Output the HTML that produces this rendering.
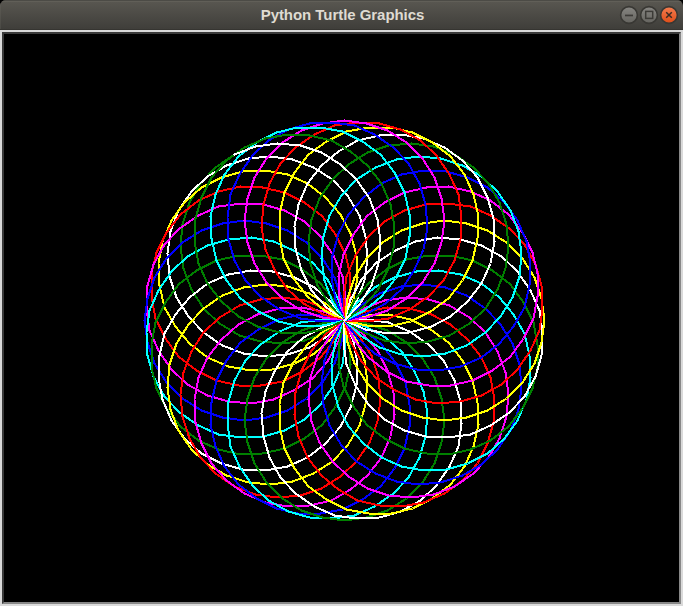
<!DOCTYPE html>
<html><head><meta charset="utf-8"><style>
html,body{margin:0;padding:0;width:683px;height:606px;overflow:hidden;background:#000}
#win{position:absolute;left:0;top:0;width:683px;height:606px;background:#000}
#fr{position:absolute;left:0;top:30px;width:683px;height:576px;background:#dadada}
#title{position:absolute;left:0;top:0;width:683px;height:30px;border-radius:6px 6px 0 0;overflow:hidden;
background:linear-gradient(#5a5852 0px,#57554f 3px,#3f3e3a 29px)}
#hl{position:absolute;left:0;top:0;width:683px;height:1px;background:#4c4b46}
#hl2{position:absolute;left:0;top:1px;width:683px;height:1px;background:#615f58}
#ll{position:absolute;left:0;top:0;width:1px;height:30px;background:linear-gradient(#5f5d56,#4a4944)}
#bl{position:absolute;left:0;top:29px;width:683px;height:1px;background:#363531}
#ttxt{position:absolute;left:1px;top:6px;width:683px;text-align:center;font:bold 15px "Liberation Sans",sans-serif;color:#dfdbd2;letter-spacing:-0.05px}
#cv{position:absolute;left:2px;top:32px;width:679px;height:572px;box-sizing:border-box;border-style:solid;border-width:2px;border-color:#3a3a3a #888 #888 #3a3a3a;background:#000}
</style></head><body><div id="win">
<div id="title"><div id="hl"></div><div id="hl2"></div><div id="ll"></div><div id="bl"></div><div id="ttxt">Python Turtle Graphics</div>
<svg width="683" height="30" style="position:absolute;left:0;top:0">
<defs>
<linearGradient id="gg" x1="0" y1="0" x2="0" y2="1"><stop offset="0" stop-color="#878682"/><stop offset="1" stop-color="#65645f"/></linearGradient>
<linearGradient id="og" x1="0" y1="0" x2="0" y2="1"><stop offset="0" stop-color="#f47d50"/><stop offset="1" stop-color="#de4c17"/></linearGradient>
</defs>
<circle cx="629" cy="15" r="8.4" fill="url(#gg)" stroke="#393834" stroke-width="1.6"/>
<rect x="625" y="14.6" width="8" height="1.7" fill="#3c3b37"/>
<circle cx="649" cy="15" r="8.4" fill="url(#gg)" stroke="#393834" stroke-width="1.6"/>
<rect x="645.7" y="11.4" width="7" height="7" fill="none" stroke="#3c3b37" stroke-width="1.5"/>
<circle cx="669" cy="15" r="8.4" fill="url(#og)" stroke="#393834" stroke-width="1.6"/>
<path d="M666.2 12.2L671.8 17.8M671.8 12.2L666.2 17.8" stroke="#3a2a22" stroke-width="1.5"/>
</svg>
</div>
<div id="fr"></div><div id="cv"></div>
<svg width="683" height="606" viewBox="0 0 683 606" style="position:absolute;left:0;top:0" shape-rendering="crispEdges" fill="none" stroke-linecap="round" stroke-linejoin="round">
<clipPath id="c"><rect x="4" y="34" width="675" height="568"/></clipPath>
<g clip-path="url(#c)">
<polyline points="344.5,320.5 366.5,317.5 387.5,310.5 406.5,298.5 422.5,282.5 434.5,263.5 441.5,242.5 444.5,220.5 441.5,198.5 434.5,177.5 422.5,158.5 406.5,142.5 387.5,130.5 366.5,123.5 344.5,120.5 322.5,123.5 301.5,130.5 282.5,142.5 266.5,158.5 254.5,177.5 247.5,198.5 244.5,220.5 247.5,242.5 254.5,263.5 266.5,282.5 282.5,298.5 301.5,310.5 322.5,317.5 344.5,320.5" stroke="#ff0000" stroke-width="2"/>
<polyline points="344.5,320.5 365.5,314.5 385.5,303.5 402.5,288.5 414.5,269.5 423.5,249.5 427.5,227.5 425.5,204.5 419.5,183.5 408.5,163.5 393.5,147.5 374.5,134.5 354.5,125.5 332.5,122.5 309.5,123.5 288.5,129.5 268.5,140.5 252.5,155.5 239.5,174.5 230.5,194.5 227.5,217.5 228.5,239.5 234.5,260.5 245.5,280.5 260.5,296.5 279.5,309.5 300.5,318.5 322.5,321.5 344.5,320.5" stroke="#ff00ff" stroke-width="2"/>
<polyline points="344.5,320.5 364.5,310.5 381.5,296.5 395.5,278.5 405.5,258.5 409.5,236.5 409.5,214.5 404.5,192.5 394.5,172.5 380.5,154.5 362.5,141.5 342.5,131.5 320.5,127.5 297.5,127.5 276.5,132.5 256.5,142.5 238.5,156.5 224.5,174.5 215.5,194.5 210.5,216.5 211.5,238.5 216.5,260.5 226.5,280.5 240.5,298.5 258.5,311.5 278.5,321.5 300.5,326.5 322.5,325.5 344.5,320.5" stroke="#0000ff" stroke-width="2"/>
<polyline points="344.5,320.5 362.5,307.5 377.5,290.5 387.5,270.5 393.5,248.5 394.5,226.5 390.5,204.5 381.5,183.5 367.5,165.5 350.5,151.5 331.5,140.5 309.5,135.5 287.5,134.5 265.5,138.5 244.5,147.5 226.5,160.5 211.5,177.5 201.5,197.5 195.5,218.5 194.5,241.5 198.5,263.5 207.5,283.5 221.5,301.5 238.5,316.5 257.5,326.5 279.5,332.5 301.5,333.5 323.5,329.5 344.5,320.5" stroke="#00ffff" stroke-width="2"/>
<polyline points="344.5,320.5 359.5,304.5 371.5,285.5 378.5,263.5 380.5,241.5 377.5,219.5 369.5,198.5 356.5,179.5 340.5,164.5 321.5,152.5 300.5,145.5 277.5,143.5 255.5,146.5 234.5,154.5 215.5,167.5 200.5,183.5 189.5,202.5 182.5,224.5 180.5,246.5 183.5,268.5 191.5,289.5 203.5,308.5 219.5,323.5 239.5,335.5 260.5,341.5 282.5,343.5 304.5,340.5 325.5,332.5 344.5,320.5" stroke="#008000" stroke-width="2"/>
<polyline points="344.5,320.5 356.5,301.5 364.5,280.5 367.5,258.5 365.5,236.5 359.5,215.5 347.5,195.5 332.5,179.5 313.5,167.5 292.5,159.5 270.5,156.5 248.5,158.5 226.5,165.5 207.5,176.5 191.5,191.5 178.5,210.5 170.5,231.5 167.5,253.5 169.5,276.5 176.5,297.5 188.5,316.5 203.5,332.5 222.5,345.5 243.5,353.5 265.5,356.5 287.5,354.5 309.5,347.5 328.5,335.5 344.5,320.5" stroke="#ffffff" stroke-width="2"/>
<polyline points="344.5,320.5 353.5,299.5 357.5,277.5 356.5,255.5 350.5,233.5 340.5,214.5 325.5,197.5 307.5,183.5 287.5,174.5 265.5,170.5 242.5,171.5 221.5,177.5 201.5,187.5 184.5,202.5 171.5,220.5 162.5,241.5 158.5,263.5 159.5,285.5 164.5,307.5 175.5,326.5 189.5,343.5 207.5,357.5 228.5,366.5 250.5,370.5 272.5,369.5 294.5,363.5 314.5,353.5 331.5,338.5 344.5,320.5" stroke="#ffff00" stroke-width="2"/>
<polyline points="344.5,320.5 349.5,298.5 350.5,276.5 345.5,254.5 335.5,234.5 322.5,216.5 304.5,202.5 284.5,192.5 262.5,187.5 240.5,186.5 218.5,191.5 198.5,200.5 180.5,214.5 166.5,232.5 156.5,252.5 151.5,273.5 151.5,296.5 155.5,318.5 165.5,338.5 178.5,356.5 196.5,370.5 216.5,380.5 238.5,385.5 260.5,385.5 282.5,381.5 302.5,371.5 320.5,357.5 334.5,340.5 344.5,320.5" stroke="#ff0000" stroke-width="2"/>
<polyline points="344.5,320.5 345.5,298.5 342.5,276.5 333.5,255.5 320.5,236.5 304.5,221.5 284.5,210.5 263.5,204.5 241.5,203.5 218.5,206.5 198.5,215.5 179.5,228.5 164.5,244.5 153.5,264.5 147.5,285.5 146.5,308.5 149.5,330.5 158.5,350.5 171.5,369.5 187.5,384.5 207.5,395.5 228.5,401.5 251.5,403.5 273.5,399.5 293.5,390.5 312.5,378.5 327.5,361.5 338.5,341.5 344.5,320.5" stroke="#ff00ff" stroke-width="2"/>
<polyline points="344.5,320.5 341.5,298.5 334.5,277.5 322.5,258.5 306.5,242.5 287.5,230.5 266.5,223.5 244.5,220.5 222.5,223.5 201.5,230.5 182.5,242.5 166.5,258.5 154.5,277.5 147.5,298.5 144.5,320.5 147.5,342.5 154.5,363.5 166.5,382.5 182.5,398.5 201.5,410.5 222.5,417.5 244.5,420.5 266.5,417.5 287.5,410.5 306.5,398.5 322.5,382.5 334.5,363.5 341.5,342.5 344.5,320.5" stroke="#0000ff" stroke-width="2"/>
<polyline points="344.5,320.5 338.5,299.5 327.5,279.5 312.5,262.5 293.5,250.5 273.5,241.5 251.5,237.5 228.5,239.5 207.5,245.5 187.5,256.5 171.5,271.5 158.5,290.5 149.5,310.5 146.5,332.5 147.5,355.5 153.5,376.5 164.5,396.5 179.5,412.5 198.5,425.5 218.5,434.5 241.5,437.5 263.5,436.5 284.5,430.5 304.5,419.5 320.5,404.5 333.5,385.5 342.5,364.5 345.5,342.5 344.5,320.5" stroke="#00ffff" stroke-width="2"/>
<polyline points="344.5,320.5 334.5,300.5 320.5,283.5 302.5,269.5 282.5,259.5 260.5,255.5 238.5,255.5 216.5,260.5 196.5,270.5 178.5,284.5 165.5,302.5 155.5,322.5 151.5,344.5 151.5,367.5 156.5,388.5 166.5,408.5 180.5,426.5 198.5,440.5 218.5,449.5 240.5,454.5 262.5,453.5 284.5,448.5 304.5,438.5 322.5,424.5 335.5,406.5 345.5,386.5 350.5,364.5 349.5,342.5 344.5,320.5" stroke="#008000" stroke-width="2"/>
<polyline points="344.5,320.5 331.5,302.5 314.5,287.5 294.5,277.5 272.5,271.5 250.5,270.5 228.5,274.5 207.5,283.5 189.5,297.5 175.5,314.5 164.5,333.5 159.5,355.5 158.5,377.5 162.5,399.5 171.5,420.5 184.5,438.5 201.5,453.5 221.5,463.5 242.5,469.5 265.5,470.5 287.5,466.5 307.5,457.5 325.5,443.5 340.5,426.5 350.5,407.5 356.5,385.5 357.5,363.5 353.5,341.5 344.5,320.5" stroke="#ffffff" stroke-width="2"/>
<polyline points="344.5,320.5 328.5,305.5 309.5,293.5 287.5,286.5 265.5,284.5 243.5,287.5 222.5,295.5 203.5,308.5 188.5,324.5 176.5,343.5 169.5,364.5 167.5,387.5 170.5,409.5 178.5,430.5 191.5,449.5 207.5,464.5 226.5,475.5 248.5,482.5 270.5,484.5 292.5,481.5 313.5,473.5 332.5,461.5 347.5,445.5 359.5,425.5 365.5,404.5 367.5,382.5 364.5,360.5 356.5,339.5 344.5,320.5" stroke="#ffff00" stroke-width="2"/>
<polyline points="344.5,320.5 325.5,308.5 304.5,300.5 282.5,297.5 260.5,299.5 239.5,305.5 219.5,317.5 203.5,332.5 191.5,351.5 183.5,372.5 180.5,394.5 182.5,416.5 189.5,438.5 200.5,457.5 215.5,473.5 234.5,486.5 255.5,494.5 277.5,497.5 300.5,495.5 321.5,488.5 340.5,476.5 356.5,461.5 369.5,442.5 377.5,421.5 380.5,399.5 378.5,377.5 371.5,355.5 359.5,336.5 344.5,320.5" stroke="#ff0000" stroke-width="2"/>
<polyline points="344.5,320.5 323.5,311.5 301.5,307.5 279.5,308.5 257.5,314.5 238.5,324.5 221.5,339.5 207.5,357.5 198.5,377.5 194.5,399.5 195.5,422.5 201.5,443.5 211.5,463.5 226.5,480.5 244.5,493.5 265.5,502.5 287.5,506.5 309.5,505.5 331.5,500.5 350.5,489.5 367.5,475.5 381.5,457.5 390.5,436.5 394.5,414.5 393.5,392.5 387.5,370.5 377.5,350.5 362.5,333.5 344.5,320.5" stroke="#ff00ff" stroke-width="2"/>
<polyline points="344.5,320.5 322.5,315.5 300.5,314.5 278.5,319.5 258.5,329.5 240.5,342.5 226.5,360.5 216.5,380.5 211.5,402.5 210.5,424.5 215.5,446.5 224.5,466.5 238.5,484.5 256.5,498.5 276.5,508.5 297.5,513.5 320.5,513.5 342.5,509.5 362.5,499.5 380.5,486.5 394.5,468.5 404.5,448.5 409.5,426.5 409.5,404.5 405.5,382.5 395.5,362.5 381.5,344.5 364.5,330.5 344.5,320.5" stroke="#0000ff" stroke-width="2"/>
<polyline points="344.5,320.5 322.5,319.5 300.5,322.5 279.5,331.5 260.5,344.5 245.5,360.5 234.5,380.5 228.5,401.5 227.5,423.5 230.5,446.5 239.5,466.5 252.5,485.5 268.5,500.5 288.5,511.5 309.5,517.5 332.5,518.5 354.5,515.5 374.5,506.5 393.5,493.5 408.5,477.5 419.5,457.5 425.5,436.5 427.5,413.5 423.5,391.5 414.5,371.5 402.5,352.5 385.5,337.5 365.5,326.5 344.5,320.5" stroke="#00ffff" stroke-width="2"/>
<polyline points="344.5,320.5 322.5,323.5 301.5,330.5 282.5,342.5 266.5,358.5 254.5,377.5 247.5,398.5 244.5,420.5 247.5,442.5 254.5,463.5 266.5,482.5 282.5,498.5 301.5,510.5 322.5,517.5 344.5,520.5 366.5,517.5 387.5,510.5 406.5,498.5 422.5,482.5 434.5,463.5 441.5,442.5 444.5,420.5 441.5,398.5 434.5,377.5 422.5,358.5 406.5,342.5 387.5,330.5 366.5,323.5 344.5,320.5" stroke="#008000" stroke-width="2"/>
<polyline points="344.5,320.5 323.5,326.5 303.5,337.5 286.5,352.5 274.5,371.5 265.5,391.5 261.5,413.5 263.5,436.5 269.5,457.5 280.5,477.5 295.5,493.5 314.5,506.5 334.5,515.5 356.5,518.5 379.5,517.5 400.5,511.5 420.5,500.5 436.5,485.5 449.5,466.5 458.5,446.5 461.5,423.5 460.5,401.5 454.5,380.5 443.5,360.5 428.5,344.5 409.5,331.5 388.5,322.5 366.5,319.5 344.5,320.5" stroke="#ffffff" stroke-width="2"/>
<polyline points="344.5,320.5 324.5,330.5 307.5,344.5 293.5,362.5 283.5,382.5 279.5,404.5 279.5,426.5 284.5,448.5 294.5,468.5 308.5,486.5 326.5,499.5 346.5,509.5 368.5,513.5 391.5,513.5 412.5,508.5 432.5,498.5 450.5,484.5 464.5,466.5 473.5,446.5 478.5,424.5 477.5,402.5 472.5,380.5 462.5,360.5 448.5,342.5 430.5,329.5 410.5,319.5 388.5,314.5 366.5,315.5 344.5,320.5" stroke="#ffff00" stroke-width="2"/>
<polyline points="344.5,320.5 326.5,333.5 311.5,350.5 301.5,370.5 295.5,392.5 294.5,414.5 298.5,436.5 307.5,457.5 321.5,475.5 338.5,489.5 357.5,500.5 379.5,505.5 401.5,506.5 423.5,502.5 444.5,493.5 462.5,480.5 477.5,463.5 487.5,443.5 493.5,422.5 494.5,399.5 490.5,377.5 481.5,357.5 467.5,339.5 450.5,324.5 431.5,314.5 409.5,308.5 387.5,307.5 365.5,311.5 344.5,320.5" stroke="#ff0000" stroke-width="2"/>
<polyline points="344.5,320.5 329.5,336.5 317.5,355.5 310.5,377.5 308.5,399.5 311.5,421.5 319.5,442.5 332.5,461.5 348.5,476.5 367.5,488.5 388.5,495.5 411.5,497.5 433.5,494.5 454.5,486.5 473.5,473.5 488.5,457.5 499.5,438.5 506.5,416.5 508.5,394.5 505.5,372.5 497.5,351.5 485.5,332.5 469.5,317.5 449.5,305.5 428.5,299.5 406.5,297.5 384.5,300.5 363.5,308.5 344.5,320.5" stroke="#ff00ff" stroke-width="2"/>
<polyline points="344.5,320.5 332.5,339.5 324.5,360.5 321.5,382.5 323.5,404.5 329.5,425.5 341.5,445.5 356.5,461.5 375.5,473.5 396.5,481.5 418.5,484.5 440.5,482.5 462.5,475.5 481.5,464.5 497.5,449.5 510.5,430.5 518.5,409.5 521.5,387.5 519.5,364.5 512.5,343.5 500.5,324.5 485.5,308.5 466.5,295.5 445.5,287.5 423.5,284.5 401.5,286.5 379.5,293.5 360.5,305.5 344.5,320.5" stroke="#0000ff" stroke-width="2"/>
<polyline points="344.5,320.5 335.5,341.5 331.5,363.5 332.5,385.5 338.5,407.5 348.5,426.5 363.5,443.5 381.5,457.5 401.5,466.5 423.5,470.5 446.5,469.5 467.5,463.5 487.5,453.5 504.5,438.5 517.5,420.5 526.5,399.5 530.5,377.5 529.5,355.5 524.5,333.5 513.5,314.5 499.5,297.5 481.5,283.5 460.5,274.5 438.5,270.5 416.5,271.5 394.5,277.5 374.5,287.5 357.5,302.5 344.5,320.5" stroke="#00ffff" stroke-width="2"/>
<polyline points="344.5,320.5 339.5,342.5 338.5,364.5 343.5,386.5 353.5,406.5 366.5,424.5 384.5,438.5 404.5,448.5 426.5,453.5 448.5,454.5 470.5,449.5 490.5,440.5 508.5,426.5 522.5,408.5 532.5,388.5 537.5,367.5 537.5,344.5 533.5,322.5 523.5,302.5 510.5,284.5 492.5,270.5 472.5,260.5 450.5,255.5 428.5,255.5 406.5,259.5 386.5,269.5 368.5,283.5 354.5,300.5 344.5,320.5" stroke="#008000" stroke-width="2"/>
<polyline points="344.5,320.5 343.5,342.5 346.5,364.5 355.5,385.5 368.5,404.5 384.5,419.5 404.5,430.5 425.5,436.5 447.5,437.5 470.5,434.5 490.5,425.5 509.5,412.5 524.5,396.5 535.5,376.5 541.5,355.5 542.5,332.5 539.5,310.5 530.5,290.5 517.5,271.5 501.5,256.5 481.5,245.5 460.5,239.5 437.5,237.5 415.5,241.5 395.5,250.5 376.5,262.5 361.5,279.5 350.5,299.5 344.5,320.5" stroke="#ffffff" stroke-width="2"/>
<polyline points="344.5,320.5 347.5,342.5 354.5,363.5 366.5,382.5 382.5,398.5 401.5,410.5 422.5,417.5 444.5,420.5 466.5,417.5 487.5,410.5 506.5,398.5 522.5,382.5 534.5,363.5 541.5,342.5 544.5,320.5 541.5,298.5 534.5,277.5 522.5,258.5 506.5,242.5 487.5,230.5 466.5,223.5 444.5,220.5 422.5,223.5 401.5,230.5 382.5,242.5 366.5,258.5 354.5,277.5 347.5,298.5 344.5,320.5" stroke="#ffff00" stroke-width="2"/>
<polyline points="344.5,320.5 350.5,341.5 361.5,361.5 376.5,378.5 395.5,390.5 415.5,399.5 437.5,403.5 460.5,401.5 481.5,395.5 501.5,384.5 517.5,369.5 530.5,350.5 539.5,330.5 542.5,308.5 541.5,285.5 535.5,264.5 524.5,244.5 509.5,228.5 490.5,215.5 470.5,206.5 447.5,203.5 425.5,204.5 404.5,210.5 384.5,221.5 368.5,236.5 355.5,255.5 346.5,276.5 343.5,298.5 344.5,320.5" stroke="#ff0000" stroke-width="2"/>
<polyline points="344.5,320.5 354.5,340.5 368.5,357.5 386.5,371.5 406.5,381.5 428.5,385.5 450.5,385.5 472.5,380.5 492.5,370.5 510.5,356.5 523.5,338.5 533.5,318.5 537.5,296.5 537.5,273.5 532.5,252.5 522.5,232.5 508.5,214.5 490.5,200.5 470.5,191.5 448.5,186.5 426.5,187.5 404.5,192.5 384.5,202.5 366.5,216.5 353.5,234.5 343.5,254.5 338.5,276.5 339.5,298.5 344.5,320.5" stroke="#ff00ff" stroke-width="2"/>
<polyline points="344.5,320.5 357.5,338.5 374.5,353.5 394.5,363.5 416.5,369.5 438.5,370.5 460.5,366.5 481.5,357.5 499.5,343.5 513.5,326.5 524.5,307.5 529.5,285.5 530.5,263.5 526.5,241.5 517.5,220.5 504.5,202.5 487.5,187.5 467.5,177.5 446.5,171.5 423.5,170.5 401.5,174.5 381.5,183.5 363.5,197.5 348.5,214.5 338.5,233.5 332.5,255.5 331.5,277.5 335.5,299.5 344.5,320.5" stroke="#0000ff" stroke-width="2"/>
<polyline points="344.5,320.5 360.5,335.5 379.5,347.5 401.5,354.5 423.5,356.5 445.5,353.5 466.5,345.5 485.5,332.5 500.5,316.5 512.5,297.5 519.5,276.5 521.5,253.5 518.5,231.5 510.5,210.5 497.5,191.5 481.5,176.5 462.5,165.5 440.5,158.5 418.5,156.5 396.5,159.5 375.5,167.5 356.5,179.5 341.5,195.5 329.5,215.5 323.5,236.5 321.5,258.5 324.5,280.5 332.5,301.5 344.5,320.5" stroke="#00ffff" stroke-width="2"/>
<polyline points="344.5,320.5 363.5,332.5 384.5,340.5 406.5,343.5 428.5,341.5 449.5,335.5 469.5,323.5 485.5,308.5 497.5,289.5 505.5,268.5 508.5,246.5 506.5,224.5 499.5,202.5 488.5,183.5 473.5,167.5 454.5,154.5 433.5,146.5 411.5,143.5 388.5,145.5 367.5,152.5 348.5,164.5 332.5,179.5 319.5,198.5 311.5,219.5 308.5,241.5 310.5,263.5 317.5,285.5 329.5,304.5 344.5,320.5" stroke="#008000" stroke-width="2"/>
<polyline points="344.5,320.5 365.5,329.5 387.5,333.5 409.5,332.5 431.5,326.5 450.5,316.5 467.5,301.5 481.5,283.5 490.5,263.5 494.5,241.5 493.5,218.5 487.5,197.5 477.5,177.5 462.5,160.5 444.5,147.5 423.5,138.5 401.5,134.5 379.5,135.5 357.5,140.5 338.5,151.5 321.5,165.5 307.5,183.5 298.5,204.5 294.5,226.5 295.5,248.5 301.5,270.5 311.5,290.5 326.5,307.5 344.5,320.5" stroke="#ffffff" stroke-width="2"/>
<polyline points="344.5,320.5 366.5,325.5 388.5,326.5 410.5,321.5 430.5,311.5 448.5,298.5 462.5,280.5 472.5,260.5 477.5,238.5 478.5,216.5 473.5,194.5 464.5,174.5 450.5,156.5 432.5,142.5 412.5,132.5 391.5,127.5 368.5,127.5 346.5,131.5 326.5,141.5 308.5,154.5 294.5,172.5 284.5,192.5 279.5,214.5 279.5,236.5 283.5,258.5 293.5,278.5 307.5,296.5 324.5,310.5 344.5,320.5" stroke="#ffff00" stroke-width="2"/>
<polyline points="344.5,320.5 366.5,321.5 388.5,318.5 409.5,309.5 428.5,296.5 443.5,280.5 454.5,260.5 460.5,239.5 461.5,217.5 458.5,194.5 449.5,174.5 436.5,155.5 420.5,140.5 400.5,129.5 379.5,123.5 356.5,122.5 334.5,125.5 314.5,134.5 295.5,147.5 280.5,163.5 269.5,183.5 263.5,204.5 261.5,227.5 265.5,249.5 274.5,269.5 286.5,288.5 303.5,303.5 323.5,314.5 344.5,320.5" stroke="#ff0000" stroke-width="2"/>
<polyline points="344.5,320.5 366.5,317.5 387.5,310.5 406.5,298.5 422.5,282.5 434.5,263.5 441.5,242.5 444.5,220.5 441.5,198.5 434.5,177.5 422.5,158.5 406.5,142.5 387.5,130.5 366.5,123.5 344.5,120.5 322.5,123.5 301.5,130.5 282.5,142.5 266.5,158.5 254.5,177.5 247.5,198.5 244.5,220.5 247.5,242.5 254.5,263.5 266.5,282.5 282.5,298.5 301.5,310.5 322.5,317.5 344.5,320.5" stroke="#ff00ff" stroke-width="2"/>
<polyline points="344.5,320.5 365.5,314.5 385.5,303.5 402.5,288.5 414.5,269.5 423.5,249.5 427.5,227.5 425.5,204.5 419.5,183.5 408.5,163.5 393.5,147.5 374.5,134.5 354.5,125.5 332.5,122.5 309.5,123.5 288.5,129.5 268.5,140.5 252.5,155.5 239.5,174.5 230.5,194.5 227.5,217.5 228.5,239.5 234.5,260.5 245.5,280.5 260.5,296.5 279.5,309.5 300.5,318.5 322.5,321.5 344.5,320.5" stroke="#0000ff" stroke-width="2"/>
<polyline points="344.5,320.5 364.5,310.5 381.5,296.5 395.5,278.5 405.5,258.5 409.5,236.5 409.5,214.5 404.5,192.5 394.5,172.5 380.5,154.5 362.5,141.5 342.5,131.5 320.5,127.5 297.5,127.5 276.5,132.5 256.5,142.5 238.5,156.5 224.5,174.5 215.5,194.5 210.5,216.5 211.5,238.5 216.5,260.5 226.5,280.5 240.5,298.5 258.5,311.5 278.5,321.5 300.5,326.5 322.5,325.5 344.5,320.5" stroke="#00ffff" stroke-width="2"/>
<polyline points="344.5,320.5 362.5,307.5 377.5,290.5 387.5,270.5 393.5,248.5 394.5,226.5 390.5,204.5 381.5,183.5 367.5,165.5 350.5,151.5 331.5,140.5 309.5,135.5 287.5,134.5 265.5,138.5 244.5,147.5 226.5,160.5 211.5,177.5 201.5,197.5 195.5,218.5 194.5,241.5 198.5,263.5 207.5,283.5 221.5,301.5 238.5,316.5 257.5,326.5 279.5,332.5 301.5,333.5 323.5,329.5 344.5,320.5" stroke="#008000" stroke-width="2"/>
<polyline points="344.5,320.5 359.5,304.5 371.5,285.5 378.5,263.5 380.5,241.5 377.5,219.5 369.5,198.5 356.5,179.5 340.5,164.5 321.5,152.5 300.5,145.5 277.5,143.5 255.5,146.5 234.5,154.5" stroke="#ffffff" stroke-width="2"/>
</g></svg>
</div></body></html>
